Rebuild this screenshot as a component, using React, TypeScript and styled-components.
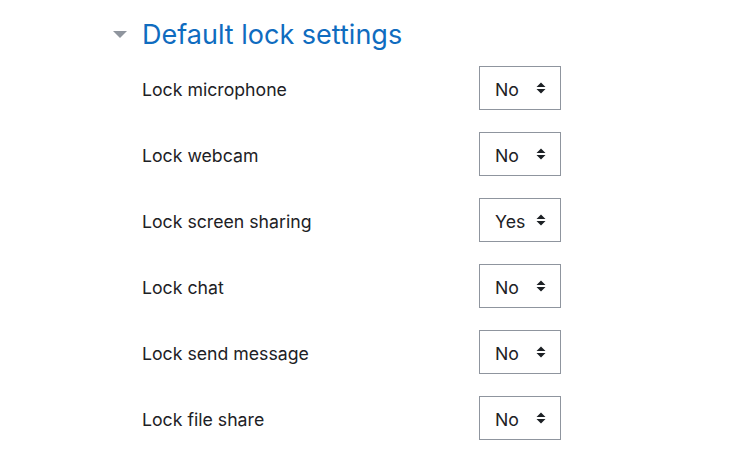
import styled, { createGlobalStyle } from "styled-components";

const Global = createGlobalStyle`
  body {
    margin: 0;
    background: #fff;
    font-family: Inter, Roboto, "Liberation Sans", sans-serif;
    color: #1d2125;
  }
`;

const Section = styled.section`
  padding: 13px 0 0 113px;
`;

const Header = styled.div`
  display: flex;
  align-items: center;
  gap: 15px;
  height: 42px;
`;

const Caret = styled.span`
  width: 0;
  height: 0;
  margin-top: 1px;
  border-left: 7px solid transparent;
  border-right: 7px solid transparent;
  border-top: 7px solid #8f959e;
`;

const Title = styled.h3`
  margin: 0;
  font-size: 27px;
  font-weight: 400;
  color: #0f6cbf;
`;

const Rows = styled.div`
  display: flex;
  flex-direction: column;
  gap: 22px;
  padding: 11px 0 0 29px;
`;

const Row = styled.div`
  display: grid;
  grid-template-columns: 337px 82px;
  align-items: center;
  height: 44px;
`;

const Label = styled.label`
  padding-top: 3px;
  font-size: 17.7px;
  color: #1d2125;
`;

const Select = styled.div`
  box-sizing: border-box;
  height: 44px;
  border: 1px solid #8f959e;
  display: flex;
  align-items: center;
  justify-content: space-between;
  padding: 0 14px 0 15px;
  font-size: 17.7px;
  color: #1d2125;
`;

const Value = styled.span`
  padding-top: 3px;
`;

const Arrows = () => (
  <svg width="10" height="12" viewBox="0 0 10 12">
    <path d="M5 0.5 L9.5 5 H0.5 Z M5 11.5 L9.5 7 H0.5 Z" fill="#1d2125" />
  </svg>
);

const rows = [
  { label: "Lock microphone", value: "No" },
  { label: "Lock webcam", value: "No" },
  { label: "Lock screen sharing", value: "Yes" },
  { label: "Lock chat", value: "No" },
  { label: "Lock send message", value: "No" },
  { label: "Lock file share", value: "No" },
];

export default function App() {
  return (
    <>
      <Global />
      <Section>
        <Header>
          <Caret />
          <Title>Default lock settings</Title>
        </Header>
        <Rows>
          {rows.map((r) => (
            <Row key={r.label}>
              <Label>{r.label}</Label>
              <Select>
                <Value>{r.value}</Value>
                <Arrows />
              </Select>
            </Row>
          ))}
        </Rows>
      </Section>
    </>
  );
}
